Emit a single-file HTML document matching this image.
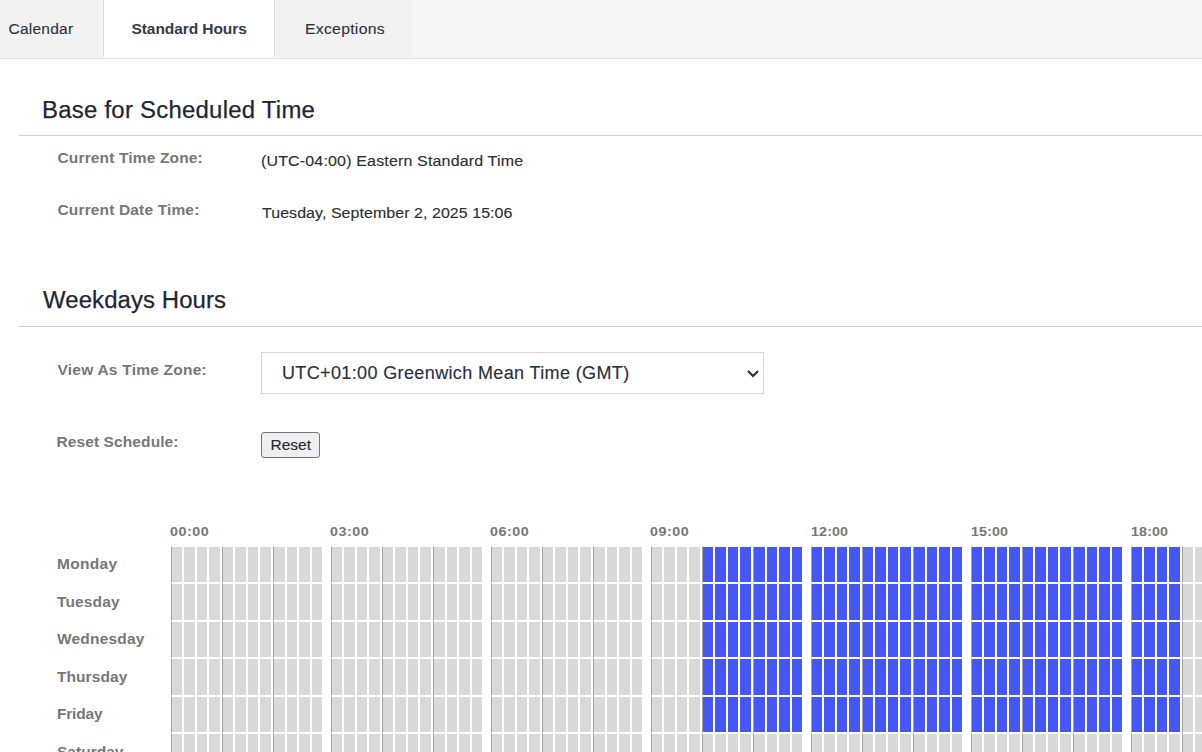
<!DOCTYPE html>
<html><head><meta charset="utf-8"><style>
html,body{margin:0;padding:0;background:#fff;width:1202px;height:752px;overflow:hidden;position:relative;font-family:"Liberation Sans",sans-serif}
.t{position:absolute;white-space:nowrap;line-height:1}
.tabbar{position:absolute;left:0;top:0;width:1202px;height:58px;background:#f6f6f6;border-bottom:1px solid #dcdfe0}
.tab{position:absolute;top:0;height:58px;background:#f2f2f2}
.hr{position:absolute;left:19px;width:1183px;height:1px;background:#d0d0d0}
.c{position:absolute;background:#d9d9d9;display:block}
.c.bl{background:#4557f7}
.b{position:absolute;width:1px;background:#a2a2a2;display:block}
</style></head><body>
<div class="tabbar"></div>
<div class="tab" style="left:0;width:101px;height:57px"></div>
<div class="tab" style="left:103px;width:172px;height:58px;background:#fff"></div>
<div style="position:absolute;left:103px;top:0;width:1px;height:57px;background:#d9dbdd"></div>
<div style="position:absolute;left:274px;top:0;width:1px;height:57px;background:#d9dbdd"></div>
<div class="tab" style="left:276px;width:136px;height:57px"></div>
<div class="t" style="left:8.50px;top:20.88px;font-size:15.5px;font-weight:400;color:#2a3140;letter-spacing:0.240px;-webkit-text-stroke:0.1px #2a3140;">Calendar</div>
<div class="t" style="left:131.50px;top:20.88px;font-size:15.5px;font-weight:700;color:#343b49;letter-spacing:-0.070px;">Standard Hours</div>
<div class="t" style="left:304.80px;top:20.88px;font-size:15.5px;font-weight:400;color:#2a3140;letter-spacing:0.250px;transform:scaleX(1.02);transform-origin:0 0;-webkit-text-stroke:0.1px #2a3140;">Exceptions</div>
<div class="t" style="left:41.50px;top:98.53px;font-size:23px;font-weight:400;color:#1f2636;letter-spacing:0.245px;transform:scaleX(1.04);transform-origin:0 0;-webkit-text-stroke:0.25px #1f2636;">Base for Scheduled Time</div>
<div class="hr" style="top:135px"></div>
<div class="t" style="left:57.50px;top:149.88px;font-size:15.5px;font-weight:700;color:#777;letter-spacing:0.150px;">Current Time Zone:</div>
<div class="t" style="left:261.00px;top:152.88px;font-size:15.5px;font-weight:400;color:#2b2f36;letter-spacing:0.170px;transform:scaleX(1.03);transform-origin:0 0;-webkit-text-stroke:0.15px #2b2f36;">(UTC-04:00) Eastern Standard Time</div>
<div class="t" style="left:57.50px;top:201.88px;font-size:15.5px;font-weight:700;color:#777;letter-spacing:0.150px;">Current Date Time:</div>
<div class="t" style="left:261.50px;top:204.88px;font-size:15.5px;font-weight:400;color:#2b2f36;letter-spacing:0.060px;transform:scaleX(1.03);transform-origin:0 0;-webkit-text-stroke:0.15px #2b2f36;">Tuesday, September 2, 2025 15:06</div>
<div class="t" style="left:43.00px;top:288.53px;font-size:23px;font-weight:400;color:#1f2636;letter-spacing:0.100px;transform:scaleX(1.04);transform-origin:0 0;-webkit-text-stroke:0.25px #1f2636;">Weekdays Hours</div>
<div class="hr" style="top:326px"></div>
<div class="t" style="left:57.50px;top:361.88px;font-size:15.5px;font-weight:700;color:#777;letter-spacing:0.230px;">View As Time Zone:</div>
<div style="position:absolute;left:261px;top:352px;width:501px;height:40px;border:1px solid #d5d7d9;background:#fff"></div>
<div class="t" style="left:282.00px;top:363.76px;font-size:18px;font-weight:400;color:#2a3040;letter-spacing:0.370px;-webkit-text-stroke:0.15px #2a3040;">UTC+01:00 Greenwich Mean Time (GMT)</div>
<svg style="position:absolute;left:746px;top:368px" width="14" height="11" viewBox="0 0 14 11"><path d="M2 3 L7 8 L12 3" fill="none" stroke="#2a3040" stroke-width="2.2"/></svg>
<div class="t" style="left:56.50px;top:433.88px;font-size:15.5px;font-weight:700;color:#777;letter-spacing:0.100px;">Reset Schedule:</div>
<div style="position:absolute;left:261px;top:432px;width:57px;height:24px;border:1px solid #767676;border-radius:3px;background:#efefef"></div>
<div class="t" style="left:270.50px;top:436.88px;font-size:15.5px;font-weight:400;color:#1f2937;letter-spacing:0.000px;-webkit-text-stroke:0.15px #1f2937;">Reset</div>
<div class="t" style="left:57.00px;top:556.28px;font-size:15.5px;font-weight:700;color:#777;letter-spacing:0.300px;">Monday</div><div class="t" style="left:57.00px;top:593.78px;font-size:15.5px;font-weight:700;color:#777;letter-spacing:0.130px;">Tuesday</div><div class="t" style="left:57.00px;top:631.28px;font-size:15.5px;font-weight:700;color:#777;letter-spacing:0.190px;">Wednesday</div><div class="t" style="left:57.00px;top:668.78px;font-size:15.5px;font-weight:700;color:#777;letter-spacing:0.070px;">Thursday</div><div class="t" style="left:57.00px;top:706.28px;font-size:15.5px;font-weight:700;color:#777;letter-spacing:-0.200px;">Friday</div><div class="t" style="left:57.00px;top:743.78px;font-size:15.5px;font-weight:700;color:#777;letter-spacing:0.010px;">Saturday</div><div class="t" style="left:170.00px;top:525.00px;font-size:13px;font-weight:700;color:#777;letter-spacing:0.500px;transform:scaleX(1.1);transform-origin:0 0;">00:00</div><div class="t" style="left:330.00px;top:525.00px;font-size:13px;font-weight:700;color:#777;letter-spacing:0.500px;transform:scaleX(1.1);transform-origin:0 0;">03:00</div><div class="t" style="left:490.00px;top:525.00px;font-size:13px;font-weight:700;color:#777;letter-spacing:0.500px;transform:scaleX(1.1);transform-origin:0 0;">06:00</div><div class="t" style="left:650.00px;top:525.00px;font-size:13px;font-weight:700;color:#777;letter-spacing:0.500px;transform:scaleX(1.1);transform-origin:0 0;">09:00</div><div class="t" style="left:811.30px;top:525.00px;font-size:13px;font-weight:700;color:#777;letter-spacing:0.100px;transform:scaleX(1.1);transform-origin:0 0;">12:00</div><div class="t" style="left:971.30px;top:525.00px;font-size:13px;font-weight:700;color:#777;letter-spacing:0.100px;transform:scaleX(1.1);transform-origin:0 0;">15:00</div><div class="t" style="left:1131.30px;top:525.00px;font-size:13px;font-weight:700;color:#777;letter-spacing:0.100px;transform:scaleX(1.1);transform-origin:0 0;">18:00</div>
<i class="b" style="left:171px;top:546px;height:206px;background:#d6d6d6"></i><i class="b" style="left:171px;top:547px;height:35px"></i><i class="c" style="left:172px;top:547px;width:10px;height:35px"></i><i class="c" style="left:184px;top:547px;width:11px;height:35px"></i><i class="c" style="left:197px;top:547px;width:10px;height:35px"></i><i class="c" style="left:209px;top:547px;width:11px;height:35px"></i><i class="b" style="left:222px;top:546px;height:206px;background:#d6d6d6"></i><i class="b" style="left:222px;top:547px;height:35px"></i><i class="c" style="left:223px;top:547px;width:10px;height:35px"></i><i class="c" style="left:235px;top:547px;width:11px;height:35px"></i><i class="c" style="left:248px;top:547px;width:10px;height:35px"></i><i class="c" style="left:260px;top:547px;width:11px;height:35px"></i><i class="b" style="left:273px;top:546px;height:206px;background:#d6d6d6"></i><i class="b" style="left:273px;top:547px;height:35px"></i><i class="c" style="left:274px;top:547px;width:11px;height:35px"></i><i class="c" style="left:287px;top:547px;width:10px;height:35px"></i><i class="c" style="left:299px;top:547px;width:11px;height:35px"></i><i class="c" style="left:312px;top:547px;width:10px;height:35px"></i><i class="b" style="left:331px;top:546px;height:206px;background:#d6d6d6"></i><i class="b" style="left:331px;top:547px;height:35px"></i><i class="c" style="left:332px;top:547px;width:10px;height:35px"></i><i class="c" style="left:344px;top:547px;width:11px;height:35px"></i><i class="c" style="left:357px;top:547px;width:10px;height:35px"></i><i class="c" style="left:369px;top:547px;width:11px;height:35px"></i><i class="b" style="left:382px;top:546px;height:206px;background:#d6d6d6"></i><i class="b" style="left:382px;top:547px;height:35px"></i><i class="c" style="left:383px;top:547px;width:10px;height:35px"></i><i class="c" style="left:395px;top:547px;width:11px;height:35px"></i><i class="c" style="left:408px;top:547px;width:10px;height:35px"></i><i class="c" style="left:420px;top:547px;width:11px;height:35px"></i><i class="b" style="left:433px;top:546px;height:206px;background:#d6d6d6"></i><i class="b" style="left:433px;top:547px;height:35px"></i><i class="c" style="left:434px;top:547px;width:11px;height:35px"></i><i class="c" style="left:447px;top:547px;width:10px;height:35px"></i><i class="c" style="left:459px;top:547px;width:11px;height:35px"></i><i class="c" style="left:472px;top:547px;width:10px;height:35px"></i><i class="b" style="left:491px;top:546px;height:206px;background:#d6d6d6"></i><i class="b" style="left:491px;top:547px;height:35px"></i><i class="c" style="left:492px;top:547px;width:10px;height:35px"></i><i class="c" style="left:504px;top:547px;width:11px;height:35px"></i><i class="c" style="left:517px;top:547px;width:10px;height:35px"></i><i class="c" style="left:529px;top:547px;width:11px;height:35px"></i><i class="b" style="left:542px;top:546px;height:206px;background:#d6d6d6"></i><i class="b" style="left:542px;top:547px;height:35px"></i><i class="c" style="left:543px;top:547px;width:10px;height:35px"></i><i class="c" style="left:555px;top:547px;width:11px;height:35px"></i><i class="c" style="left:568px;top:547px;width:10px;height:35px"></i><i class="c" style="left:580px;top:547px;width:11px;height:35px"></i><i class="b" style="left:593px;top:546px;height:206px;background:#d6d6d6"></i><i class="b" style="left:593px;top:547px;height:35px"></i><i class="c" style="left:594px;top:547px;width:11px;height:35px"></i><i class="c" style="left:607px;top:547px;width:10px;height:35px"></i><i class="c" style="left:619px;top:547px;width:11px;height:35px"></i><i class="c" style="left:632px;top:547px;width:10px;height:35px"></i><i class="b" style="left:651px;top:546px;height:206px;background:#d6d6d6"></i><i class="b" style="left:651px;top:547px;height:35px"></i><i class="c" style="left:652px;top:547px;width:10px;height:35px"></i><i class="c" style="left:664px;top:547px;width:11px;height:35px"></i><i class="c" style="left:677px;top:547px;width:10px;height:35px"></i><i class="c" style="left:689px;top:547px;width:11px;height:35px"></i><i class="b" style="left:702px;top:546px;height:206px;background:#d6d6d6"></i><i class="b" style="left:702px;top:547px;height:35px"></i><i class="c bl" style="left:703px;top:547px;width:10px;height:35px"></i><i class="c bl" style="left:715px;top:547px;width:11px;height:35px"></i><i class="c bl" style="left:728px;top:547px;width:10px;height:35px"></i><i class="c bl" style="left:740px;top:547px;width:11px;height:35px"></i><i class="b" style="left:753px;top:546px;height:206px;background:#d6d6d6"></i><i class="b" style="left:753px;top:547px;height:35px"></i><i class="c bl" style="left:754px;top:547px;width:11px;height:35px"></i><i class="c bl" style="left:767px;top:547px;width:10px;height:35px"></i><i class="c bl" style="left:779px;top:547px;width:11px;height:35px"></i><i class="c bl" style="left:792px;top:547px;width:10px;height:35px"></i><i class="b" style="left:811px;top:546px;height:206px;background:#d6d6d6"></i><i class="b" style="left:811px;top:547px;height:35px"></i><i class="c bl" style="left:812px;top:547px;width:10px;height:35px"></i><i class="c bl" style="left:824px;top:547px;width:11px;height:35px"></i><i class="c bl" style="left:837px;top:547px;width:10px;height:35px"></i><i class="c bl" style="left:849px;top:547px;width:11px;height:35px"></i><i class="b" style="left:862px;top:546px;height:206px;background:#d6d6d6"></i><i class="b" style="left:862px;top:547px;height:35px"></i><i class="c bl" style="left:863px;top:547px;width:10px;height:35px"></i><i class="c bl" style="left:875px;top:547px;width:11px;height:35px"></i><i class="c bl" style="left:888px;top:547px;width:10px;height:35px"></i><i class="c bl" style="left:900px;top:547px;width:11px;height:35px"></i><i class="b" style="left:913px;top:546px;height:206px;background:#d6d6d6"></i><i class="b" style="left:913px;top:547px;height:35px"></i><i class="c bl" style="left:914px;top:547px;width:11px;height:35px"></i><i class="c bl" style="left:927px;top:547px;width:10px;height:35px"></i><i class="c bl" style="left:939px;top:547px;width:11px;height:35px"></i><i class="c bl" style="left:952px;top:547px;width:10px;height:35px"></i><i class="b" style="left:971px;top:546px;height:206px;background:#d6d6d6"></i><i class="b" style="left:971px;top:547px;height:35px"></i><i class="c bl" style="left:972px;top:547px;width:10px;height:35px"></i><i class="c bl" style="left:984px;top:547px;width:11px;height:35px"></i><i class="c bl" style="left:997px;top:547px;width:10px;height:35px"></i><i class="c bl" style="left:1009px;top:547px;width:11px;height:35px"></i><i class="b" style="left:1022px;top:546px;height:206px;background:#d6d6d6"></i><i class="b" style="left:1022px;top:547px;height:35px"></i><i class="c bl" style="left:1023px;top:547px;width:10px;height:35px"></i><i class="c bl" style="left:1035px;top:547px;width:11px;height:35px"></i><i class="c bl" style="left:1048px;top:547px;width:10px;height:35px"></i><i class="c bl" style="left:1060px;top:547px;width:11px;height:35px"></i><i class="b" style="left:1073px;top:546px;height:206px;background:#d6d6d6"></i><i class="b" style="left:1073px;top:547px;height:35px"></i><i class="c bl" style="left:1074px;top:547px;width:11px;height:35px"></i><i class="c bl" style="left:1087px;top:547px;width:10px;height:35px"></i><i class="c bl" style="left:1099px;top:547px;width:11px;height:35px"></i><i class="c bl" style="left:1112px;top:547px;width:10px;height:35px"></i><i class="b" style="left:1131px;top:546px;height:206px;background:#d6d6d6"></i><i class="b" style="left:1131px;top:547px;height:35px"></i><i class="c bl" style="left:1132px;top:547px;width:10px;height:35px"></i><i class="c bl" style="left:1144px;top:547px;width:11px;height:35px"></i><i class="c bl" style="left:1157px;top:547px;width:10px;height:35px"></i><i class="c bl" style="left:1169px;top:547px;width:11px;height:35px"></i><i class="b" style="left:1182px;top:546px;height:206px;background:#d6d6d6"></i><i class="b" style="left:1182px;top:547px;height:35px"></i><i class="c" style="left:1183px;top:547px;width:10px;height:35px"></i><i class="c" style="left:1195px;top:547px;width:11px;height:35px"></i><i class="b" style="left:171px;top:584px;height:36px"></i><i class="c" style="left:172px;top:584px;width:10px;height:36px"></i><i class="c" style="left:184px;top:584px;width:11px;height:36px"></i><i class="c" style="left:197px;top:584px;width:10px;height:36px"></i><i class="c" style="left:209px;top:584px;width:11px;height:36px"></i><i class="b" style="left:222px;top:584px;height:36px"></i><i class="c" style="left:223px;top:584px;width:10px;height:36px"></i><i class="c" style="left:235px;top:584px;width:11px;height:36px"></i><i class="c" style="left:248px;top:584px;width:10px;height:36px"></i><i class="c" style="left:260px;top:584px;width:11px;height:36px"></i><i class="b" style="left:273px;top:584px;height:36px"></i><i class="c" style="left:274px;top:584px;width:11px;height:36px"></i><i class="c" style="left:287px;top:584px;width:10px;height:36px"></i><i class="c" style="left:299px;top:584px;width:11px;height:36px"></i><i class="c" style="left:312px;top:584px;width:10px;height:36px"></i><i class="b" style="left:331px;top:584px;height:36px"></i><i class="c" style="left:332px;top:584px;width:10px;height:36px"></i><i class="c" style="left:344px;top:584px;width:11px;height:36px"></i><i class="c" style="left:357px;top:584px;width:10px;height:36px"></i><i class="c" style="left:369px;top:584px;width:11px;height:36px"></i><i class="b" style="left:382px;top:584px;height:36px"></i><i class="c" style="left:383px;top:584px;width:10px;height:36px"></i><i class="c" style="left:395px;top:584px;width:11px;height:36px"></i><i class="c" style="left:408px;top:584px;width:10px;height:36px"></i><i class="c" style="left:420px;top:584px;width:11px;height:36px"></i><i class="b" style="left:433px;top:584px;height:36px"></i><i class="c" style="left:434px;top:584px;width:11px;height:36px"></i><i class="c" style="left:447px;top:584px;width:10px;height:36px"></i><i class="c" style="left:459px;top:584px;width:11px;height:36px"></i><i class="c" style="left:472px;top:584px;width:10px;height:36px"></i><i class="b" style="left:491px;top:584px;height:36px"></i><i class="c" style="left:492px;top:584px;width:10px;height:36px"></i><i class="c" style="left:504px;top:584px;width:11px;height:36px"></i><i class="c" style="left:517px;top:584px;width:10px;height:36px"></i><i class="c" style="left:529px;top:584px;width:11px;height:36px"></i><i class="b" style="left:542px;top:584px;height:36px"></i><i class="c" style="left:543px;top:584px;width:10px;height:36px"></i><i class="c" style="left:555px;top:584px;width:11px;height:36px"></i><i class="c" style="left:568px;top:584px;width:10px;height:36px"></i><i class="c" style="left:580px;top:584px;width:11px;height:36px"></i><i class="b" style="left:593px;top:584px;height:36px"></i><i class="c" style="left:594px;top:584px;width:11px;height:36px"></i><i class="c" style="left:607px;top:584px;width:10px;height:36px"></i><i class="c" style="left:619px;top:584px;width:11px;height:36px"></i><i class="c" style="left:632px;top:584px;width:10px;height:36px"></i><i class="b" style="left:651px;top:584px;height:36px"></i><i class="c" style="left:652px;top:584px;width:10px;height:36px"></i><i class="c" style="left:664px;top:584px;width:11px;height:36px"></i><i class="c" style="left:677px;top:584px;width:10px;height:36px"></i><i class="c" style="left:689px;top:584px;width:11px;height:36px"></i><i class="b" style="left:702px;top:584px;height:36px"></i><i class="c bl" style="left:703px;top:584px;width:10px;height:36px"></i><i class="c bl" style="left:715px;top:584px;width:11px;height:36px"></i><i class="c bl" style="left:728px;top:584px;width:10px;height:36px"></i><i class="c bl" style="left:740px;top:584px;width:11px;height:36px"></i><i class="b" style="left:753px;top:584px;height:36px"></i><i class="c bl" style="left:754px;top:584px;width:11px;height:36px"></i><i class="c bl" style="left:767px;top:584px;width:10px;height:36px"></i><i class="c bl" style="left:779px;top:584px;width:11px;height:36px"></i><i class="c bl" style="left:792px;top:584px;width:10px;height:36px"></i><i class="b" style="left:811px;top:584px;height:36px"></i><i class="c bl" style="left:812px;top:584px;width:10px;height:36px"></i><i class="c bl" style="left:824px;top:584px;width:11px;height:36px"></i><i class="c bl" style="left:837px;top:584px;width:10px;height:36px"></i><i class="c bl" style="left:849px;top:584px;width:11px;height:36px"></i><i class="b" style="left:862px;top:584px;height:36px"></i><i class="c bl" style="left:863px;top:584px;width:10px;height:36px"></i><i class="c bl" style="left:875px;top:584px;width:11px;height:36px"></i><i class="c bl" style="left:888px;top:584px;width:10px;height:36px"></i><i class="c bl" style="left:900px;top:584px;width:11px;height:36px"></i><i class="b" style="left:913px;top:584px;height:36px"></i><i class="c bl" style="left:914px;top:584px;width:11px;height:36px"></i><i class="c bl" style="left:927px;top:584px;width:10px;height:36px"></i><i class="c bl" style="left:939px;top:584px;width:11px;height:36px"></i><i class="c bl" style="left:952px;top:584px;width:10px;height:36px"></i><i class="b" style="left:971px;top:584px;height:36px"></i><i class="c bl" style="left:972px;top:584px;width:10px;height:36px"></i><i class="c bl" style="left:984px;top:584px;width:11px;height:36px"></i><i class="c bl" style="left:997px;top:584px;width:10px;height:36px"></i><i class="c bl" style="left:1009px;top:584px;width:11px;height:36px"></i><i class="b" style="left:1022px;top:584px;height:36px"></i><i class="c bl" style="left:1023px;top:584px;width:10px;height:36px"></i><i class="c bl" style="left:1035px;top:584px;width:11px;height:36px"></i><i class="c bl" style="left:1048px;top:584px;width:10px;height:36px"></i><i class="c bl" style="left:1060px;top:584px;width:11px;height:36px"></i><i class="b" style="left:1073px;top:584px;height:36px"></i><i class="c bl" style="left:1074px;top:584px;width:11px;height:36px"></i><i class="c bl" style="left:1087px;top:584px;width:10px;height:36px"></i><i class="c bl" style="left:1099px;top:584px;width:11px;height:36px"></i><i class="c bl" style="left:1112px;top:584px;width:10px;height:36px"></i><i class="b" style="left:1131px;top:584px;height:36px"></i><i class="c bl" style="left:1132px;top:584px;width:10px;height:36px"></i><i class="c bl" style="left:1144px;top:584px;width:11px;height:36px"></i><i class="c bl" style="left:1157px;top:584px;width:10px;height:36px"></i><i class="c bl" style="left:1169px;top:584px;width:11px;height:36px"></i><i class="b" style="left:1182px;top:584px;height:36px"></i><i class="c" style="left:1183px;top:584px;width:10px;height:36px"></i><i class="c" style="left:1195px;top:584px;width:11px;height:36px"></i><i class="b" style="left:171px;top:622px;height:35px"></i><i class="c" style="left:172px;top:622px;width:10px;height:35px"></i><i class="c" style="left:184px;top:622px;width:11px;height:35px"></i><i class="c" style="left:197px;top:622px;width:10px;height:35px"></i><i class="c" style="left:209px;top:622px;width:11px;height:35px"></i><i class="b" style="left:222px;top:622px;height:35px"></i><i class="c" style="left:223px;top:622px;width:10px;height:35px"></i><i class="c" style="left:235px;top:622px;width:11px;height:35px"></i><i class="c" style="left:248px;top:622px;width:10px;height:35px"></i><i class="c" style="left:260px;top:622px;width:11px;height:35px"></i><i class="b" style="left:273px;top:622px;height:35px"></i><i class="c" style="left:274px;top:622px;width:11px;height:35px"></i><i class="c" style="left:287px;top:622px;width:10px;height:35px"></i><i class="c" style="left:299px;top:622px;width:11px;height:35px"></i><i class="c" style="left:312px;top:622px;width:10px;height:35px"></i><i class="b" style="left:331px;top:622px;height:35px"></i><i class="c" style="left:332px;top:622px;width:10px;height:35px"></i><i class="c" style="left:344px;top:622px;width:11px;height:35px"></i><i class="c" style="left:357px;top:622px;width:10px;height:35px"></i><i class="c" style="left:369px;top:622px;width:11px;height:35px"></i><i class="b" style="left:382px;top:622px;height:35px"></i><i class="c" style="left:383px;top:622px;width:10px;height:35px"></i><i class="c" style="left:395px;top:622px;width:11px;height:35px"></i><i class="c" style="left:408px;top:622px;width:10px;height:35px"></i><i class="c" style="left:420px;top:622px;width:11px;height:35px"></i><i class="b" style="left:433px;top:622px;height:35px"></i><i class="c" style="left:434px;top:622px;width:11px;height:35px"></i><i class="c" style="left:447px;top:622px;width:10px;height:35px"></i><i class="c" style="left:459px;top:622px;width:11px;height:35px"></i><i class="c" style="left:472px;top:622px;width:10px;height:35px"></i><i class="b" style="left:491px;top:622px;height:35px"></i><i class="c" style="left:492px;top:622px;width:10px;height:35px"></i><i class="c" style="left:504px;top:622px;width:11px;height:35px"></i><i class="c" style="left:517px;top:622px;width:10px;height:35px"></i><i class="c" style="left:529px;top:622px;width:11px;height:35px"></i><i class="b" style="left:542px;top:622px;height:35px"></i><i class="c" style="left:543px;top:622px;width:10px;height:35px"></i><i class="c" style="left:555px;top:622px;width:11px;height:35px"></i><i class="c" style="left:568px;top:622px;width:10px;height:35px"></i><i class="c" style="left:580px;top:622px;width:11px;height:35px"></i><i class="b" style="left:593px;top:622px;height:35px"></i><i class="c" style="left:594px;top:622px;width:11px;height:35px"></i><i class="c" style="left:607px;top:622px;width:10px;height:35px"></i><i class="c" style="left:619px;top:622px;width:11px;height:35px"></i><i class="c" style="left:632px;top:622px;width:10px;height:35px"></i><i class="b" style="left:651px;top:622px;height:35px"></i><i class="c" style="left:652px;top:622px;width:10px;height:35px"></i><i class="c" style="left:664px;top:622px;width:11px;height:35px"></i><i class="c" style="left:677px;top:622px;width:10px;height:35px"></i><i class="c" style="left:689px;top:622px;width:11px;height:35px"></i><i class="b" style="left:702px;top:622px;height:35px"></i><i class="c bl" style="left:703px;top:622px;width:10px;height:35px"></i><i class="c bl" style="left:715px;top:622px;width:11px;height:35px"></i><i class="c bl" style="left:728px;top:622px;width:10px;height:35px"></i><i class="c bl" style="left:740px;top:622px;width:11px;height:35px"></i><i class="b" style="left:753px;top:622px;height:35px"></i><i class="c bl" style="left:754px;top:622px;width:11px;height:35px"></i><i class="c bl" style="left:767px;top:622px;width:10px;height:35px"></i><i class="c bl" style="left:779px;top:622px;width:11px;height:35px"></i><i class="c bl" style="left:792px;top:622px;width:10px;height:35px"></i><i class="b" style="left:811px;top:622px;height:35px"></i><i class="c bl" style="left:812px;top:622px;width:10px;height:35px"></i><i class="c bl" style="left:824px;top:622px;width:11px;height:35px"></i><i class="c bl" style="left:837px;top:622px;width:10px;height:35px"></i><i class="c bl" style="left:849px;top:622px;width:11px;height:35px"></i><i class="b" style="left:862px;top:622px;height:35px"></i><i class="c bl" style="left:863px;top:622px;width:10px;height:35px"></i><i class="c bl" style="left:875px;top:622px;width:11px;height:35px"></i><i class="c bl" style="left:888px;top:622px;width:10px;height:35px"></i><i class="c bl" style="left:900px;top:622px;width:11px;height:35px"></i><i class="b" style="left:913px;top:622px;height:35px"></i><i class="c bl" style="left:914px;top:622px;width:11px;height:35px"></i><i class="c bl" style="left:927px;top:622px;width:10px;height:35px"></i><i class="c bl" style="left:939px;top:622px;width:11px;height:35px"></i><i class="c bl" style="left:952px;top:622px;width:10px;height:35px"></i><i class="b" style="left:971px;top:622px;height:35px"></i><i class="c bl" style="left:972px;top:622px;width:10px;height:35px"></i><i class="c bl" style="left:984px;top:622px;width:11px;height:35px"></i><i class="c bl" style="left:997px;top:622px;width:10px;height:35px"></i><i class="c bl" style="left:1009px;top:622px;width:11px;height:35px"></i><i class="b" style="left:1022px;top:622px;height:35px"></i><i class="c bl" style="left:1023px;top:622px;width:10px;height:35px"></i><i class="c bl" style="left:1035px;top:622px;width:11px;height:35px"></i><i class="c bl" style="left:1048px;top:622px;width:10px;height:35px"></i><i class="c bl" style="left:1060px;top:622px;width:11px;height:35px"></i><i class="b" style="left:1073px;top:622px;height:35px"></i><i class="c bl" style="left:1074px;top:622px;width:11px;height:35px"></i><i class="c bl" style="left:1087px;top:622px;width:10px;height:35px"></i><i class="c bl" style="left:1099px;top:622px;width:11px;height:35px"></i><i class="c bl" style="left:1112px;top:622px;width:10px;height:35px"></i><i class="b" style="left:1131px;top:622px;height:35px"></i><i class="c bl" style="left:1132px;top:622px;width:10px;height:35px"></i><i class="c bl" style="left:1144px;top:622px;width:11px;height:35px"></i><i class="c bl" style="left:1157px;top:622px;width:10px;height:35px"></i><i class="c bl" style="left:1169px;top:622px;width:11px;height:35px"></i><i class="b" style="left:1182px;top:622px;height:35px"></i><i class="c" style="left:1183px;top:622px;width:10px;height:35px"></i><i class="c" style="left:1195px;top:622px;width:11px;height:35px"></i><i class="b" style="left:171px;top:659px;height:36px"></i><i class="c" style="left:172px;top:659px;width:10px;height:36px"></i><i class="c" style="left:184px;top:659px;width:11px;height:36px"></i><i class="c" style="left:197px;top:659px;width:10px;height:36px"></i><i class="c" style="left:209px;top:659px;width:11px;height:36px"></i><i class="b" style="left:222px;top:659px;height:36px"></i><i class="c" style="left:223px;top:659px;width:10px;height:36px"></i><i class="c" style="left:235px;top:659px;width:11px;height:36px"></i><i class="c" style="left:248px;top:659px;width:10px;height:36px"></i><i class="c" style="left:260px;top:659px;width:11px;height:36px"></i><i class="b" style="left:273px;top:659px;height:36px"></i><i class="c" style="left:274px;top:659px;width:11px;height:36px"></i><i class="c" style="left:287px;top:659px;width:10px;height:36px"></i><i class="c" style="left:299px;top:659px;width:11px;height:36px"></i><i class="c" style="left:312px;top:659px;width:10px;height:36px"></i><i class="b" style="left:331px;top:659px;height:36px"></i><i class="c" style="left:332px;top:659px;width:10px;height:36px"></i><i class="c" style="left:344px;top:659px;width:11px;height:36px"></i><i class="c" style="left:357px;top:659px;width:10px;height:36px"></i><i class="c" style="left:369px;top:659px;width:11px;height:36px"></i><i class="b" style="left:382px;top:659px;height:36px"></i><i class="c" style="left:383px;top:659px;width:10px;height:36px"></i><i class="c" style="left:395px;top:659px;width:11px;height:36px"></i><i class="c" style="left:408px;top:659px;width:10px;height:36px"></i><i class="c" style="left:420px;top:659px;width:11px;height:36px"></i><i class="b" style="left:433px;top:659px;height:36px"></i><i class="c" style="left:434px;top:659px;width:11px;height:36px"></i><i class="c" style="left:447px;top:659px;width:10px;height:36px"></i><i class="c" style="left:459px;top:659px;width:11px;height:36px"></i><i class="c" style="left:472px;top:659px;width:10px;height:36px"></i><i class="b" style="left:491px;top:659px;height:36px"></i><i class="c" style="left:492px;top:659px;width:10px;height:36px"></i><i class="c" style="left:504px;top:659px;width:11px;height:36px"></i><i class="c" style="left:517px;top:659px;width:10px;height:36px"></i><i class="c" style="left:529px;top:659px;width:11px;height:36px"></i><i class="b" style="left:542px;top:659px;height:36px"></i><i class="c" style="left:543px;top:659px;width:10px;height:36px"></i><i class="c" style="left:555px;top:659px;width:11px;height:36px"></i><i class="c" style="left:568px;top:659px;width:10px;height:36px"></i><i class="c" style="left:580px;top:659px;width:11px;height:36px"></i><i class="b" style="left:593px;top:659px;height:36px"></i><i class="c" style="left:594px;top:659px;width:11px;height:36px"></i><i class="c" style="left:607px;top:659px;width:10px;height:36px"></i><i class="c" style="left:619px;top:659px;width:11px;height:36px"></i><i class="c" style="left:632px;top:659px;width:10px;height:36px"></i><i class="b" style="left:651px;top:659px;height:36px"></i><i class="c" style="left:652px;top:659px;width:10px;height:36px"></i><i class="c" style="left:664px;top:659px;width:11px;height:36px"></i><i class="c" style="left:677px;top:659px;width:10px;height:36px"></i><i class="c" style="left:689px;top:659px;width:11px;height:36px"></i><i class="b" style="left:702px;top:659px;height:36px"></i><i class="c bl" style="left:703px;top:659px;width:10px;height:36px"></i><i class="c bl" style="left:715px;top:659px;width:11px;height:36px"></i><i class="c bl" style="left:728px;top:659px;width:10px;height:36px"></i><i class="c bl" style="left:740px;top:659px;width:11px;height:36px"></i><i class="b" style="left:753px;top:659px;height:36px"></i><i class="c bl" style="left:754px;top:659px;width:11px;height:36px"></i><i class="c bl" style="left:767px;top:659px;width:10px;height:36px"></i><i class="c bl" style="left:779px;top:659px;width:11px;height:36px"></i><i class="c bl" style="left:792px;top:659px;width:10px;height:36px"></i><i class="b" style="left:811px;top:659px;height:36px"></i><i class="c bl" style="left:812px;top:659px;width:10px;height:36px"></i><i class="c bl" style="left:824px;top:659px;width:11px;height:36px"></i><i class="c bl" style="left:837px;top:659px;width:10px;height:36px"></i><i class="c bl" style="left:849px;top:659px;width:11px;height:36px"></i><i class="b" style="left:862px;top:659px;height:36px"></i><i class="c bl" style="left:863px;top:659px;width:10px;height:36px"></i><i class="c bl" style="left:875px;top:659px;width:11px;height:36px"></i><i class="c bl" style="left:888px;top:659px;width:10px;height:36px"></i><i class="c bl" style="left:900px;top:659px;width:11px;height:36px"></i><i class="b" style="left:913px;top:659px;height:36px"></i><i class="c bl" style="left:914px;top:659px;width:11px;height:36px"></i><i class="c bl" style="left:927px;top:659px;width:10px;height:36px"></i><i class="c bl" style="left:939px;top:659px;width:11px;height:36px"></i><i class="c bl" style="left:952px;top:659px;width:10px;height:36px"></i><i class="b" style="left:971px;top:659px;height:36px"></i><i class="c bl" style="left:972px;top:659px;width:10px;height:36px"></i><i class="c bl" style="left:984px;top:659px;width:11px;height:36px"></i><i class="c bl" style="left:997px;top:659px;width:10px;height:36px"></i><i class="c bl" style="left:1009px;top:659px;width:11px;height:36px"></i><i class="b" style="left:1022px;top:659px;height:36px"></i><i class="c bl" style="left:1023px;top:659px;width:10px;height:36px"></i><i class="c bl" style="left:1035px;top:659px;width:11px;height:36px"></i><i class="c bl" style="left:1048px;top:659px;width:10px;height:36px"></i><i class="c bl" style="left:1060px;top:659px;width:11px;height:36px"></i><i class="b" style="left:1073px;top:659px;height:36px"></i><i class="c bl" style="left:1074px;top:659px;width:11px;height:36px"></i><i class="c bl" style="left:1087px;top:659px;width:10px;height:36px"></i><i class="c bl" style="left:1099px;top:659px;width:11px;height:36px"></i><i class="c bl" style="left:1112px;top:659px;width:10px;height:36px"></i><i class="b" style="left:1131px;top:659px;height:36px"></i><i class="c bl" style="left:1132px;top:659px;width:10px;height:36px"></i><i class="c bl" style="left:1144px;top:659px;width:11px;height:36px"></i><i class="c bl" style="left:1157px;top:659px;width:10px;height:36px"></i><i class="c bl" style="left:1169px;top:659px;width:11px;height:36px"></i><i class="b" style="left:1182px;top:659px;height:36px"></i><i class="c" style="left:1183px;top:659px;width:10px;height:36px"></i><i class="c" style="left:1195px;top:659px;width:11px;height:36px"></i><i class="b" style="left:171px;top:697px;height:35px"></i><i class="c" style="left:172px;top:697px;width:10px;height:35px"></i><i class="c" style="left:184px;top:697px;width:11px;height:35px"></i><i class="c" style="left:197px;top:697px;width:10px;height:35px"></i><i class="c" style="left:209px;top:697px;width:11px;height:35px"></i><i class="b" style="left:222px;top:697px;height:35px"></i><i class="c" style="left:223px;top:697px;width:10px;height:35px"></i><i class="c" style="left:235px;top:697px;width:11px;height:35px"></i><i class="c" style="left:248px;top:697px;width:10px;height:35px"></i><i class="c" style="left:260px;top:697px;width:11px;height:35px"></i><i class="b" style="left:273px;top:697px;height:35px"></i><i class="c" style="left:274px;top:697px;width:11px;height:35px"></i><i class="c" style="left:287px;top:697px;width:10px;height:35px"></i><i class="c" style="left:299px;top:697px;width:11px;height:35px"></i><i class="c" style="left:312px;top:697px;width:10px;height:35px"></i><i class="b" style="left:331px;top:697px;height:35px"></i><i class="c" style="left:332px;top:697px;width:10px;height:35px"></i><i class="c" style="left:344px;top:697px;width:11px;height:35px"></i><i class="c" style="left:357px;top:697px;width:10px;height:35px"></i><i class="c" style="left:369px;top:697px;width:11px;height:35px"></i><i class="b" style="left:382px;top:697px;height:35px"></i><i class="c" style="left:383px;top:697px;width:10px;height:35px"></i><i class="c" style="left:395px;top:697px;width:11px;height:35px"></i><i class="c" style="left:408px;top:697px;width:10px;height:35px"></i><i class="c" style="left:420px;top:697px;width:11px;height:35px"></i><i class="b" style="left:433px;top:697px;height:35px"></i><i class="c" style="left:434px;top:697px;width:11px;height:35px"></i><i class="c" style="left:447px;top:697px;width:10px;height:35px"></i><i class="c" style="left:459px;top:697px;width:11px;height:35px"></i><i class="c" style="left:472px;top:697px;width:10px;height:35px"></i><i class="b" style="left:491px;top:697px;height:35px"></i><i class="c" style="left:492px;top:697px;width:10px;height:35px"></i><i class="c" style="left:504px;top:697px;width:11px;height:35px"></i><i class="c" style="left:517px;top:697px;width:10px;height:35px"></i><i class="c" style="left:529px;top:697px;width:11px;height:35px"></i><i class="b" style="left:542px;top:697px;height:35px"></i><i class="c" style="left:543px;top:697px;width:10px;height:35px"></i><i class="c" style="left:555px;top:697px;width:11px;height:35px"></i><i class="c" style="left:568px;top:697px;width:10px;height:35px"></i><i class="c" style="left:580px;top:697px;width:11px;height:35px"></i><i class="b" style="left:593px;top:697px;height:35px"></i><i class="c" style="left:594px;top:697px;width:11px;height:35px"></i><i class="c" style="left:607px;top:697px;width:10px;height:35px"></i><i class="c" style="left:619px;top:697px;width:11px;height:35px"></i><i class="c" style="left:632px;top:697px;width:10px;height:35px"></i><i class="b" style="left:651px;top:697px;height:35px"></i><i class="c" style="left:652px;top:697px;width:10px;height:35px"></i><i class="c" style="left:664px;top:697px;width:11px;height:35px"></i><i class="c" style="left:677px;top:697px;width:10px;height:35px"></i><i class="c" style="left:689px;top:697px;width:11px;height:35px"></i><i class="b" style="left:702px;top:697px;height:35px"></i><i class="c bl" style="left:703px;top:697px;width:10px;height:35px"></i><i class="c bl" style="left:715px;top:697px;width:11px;height:35px"></i><i class="c bl" style="left:728px;top:697px;width:10px;height:35px"></i><i class="c bl" style="left:740px;top:697px;width:11px;height:35px"></i><i class="b" style="left:753px;top:697px;height:35px"></i><i class="c bl" style="left:754px;top:697px;width:11px;height:35px"></i><i class="c bl" style="left:767px;top:697px;width:10px;height:35px"></i><i class="c bl" style="left:779px;top:697px;width:11px;height:35px"></i><i class="c bl" style="left:792px;top:697px;width:10px;height:35px"></i><i class="b" style="left:811px;top:697px;height:35px"></i><i class="c bl" style="left:812px;top:697px;width:10px;height:35px"></i><i class="c bl" style="left:824px;top:697px;width:11px;height:35px"></i><i class="c bl" style="left:837px;top:697px;width:10px;height:35px"></i><i class="c bl" style="left:849px;top:697px;width:11px;height:35px"></i><i class="b" style="left:862px;top:697px;height:35px"></i><i class="c bl" style="left:863px;top:697px;width:10px;height:35px"></i><i class="c bl" style="left:875px;top:697px;width:11px;height:35px"></i><i class="c bl" style="left:888px;top:697px;width:10px;height:35px"></i><i class="c bl" style="left:900px;top:697px;width:11px;height:35px"></i><i class="b" style="left:913px;top:697px;height:35px"></i><i class="c bl" style="left:914px;top:697px;width:11px;height:35px"></i><i class="c bl" style="left:927px;top:697px;width:10px;height:35px"></i><i class="c bl" style="left:939px;top:697px;width:11px;height:35px"></i><i class="c bl" style="left:952px;top:697px;width:10px;height:35px"></i><i class="b" style="left:971px;top:697px;height:35px"></i><i class="c bl" style="left:972px;top:697px;width:10px;height:35px"></i><i class="c bl" style="left:984px;top:697px;width:11px;height:35px"></i><i class="c bl" style="left:997px;top:697px;width:10px;height:35px"></i><i class="c bl" style="left:1009px;top:697px;width:11px;height:35px"></i><i class="b" style="left:1022px;top:697px;height:35px"></i><i class="c bl" style="left:1023px;top:697px;width:10px;height:35px"></i><i class="c bl" style="left:1035px;top:697px;width:11px;height:35px"></i><i class="c bl" style="left:1048px;top:697px;width:10px;height:35px"></i><i class="c bl" style="left:1060px;top:697px;width:11px;height:35px"></i><i class="b" style="left:1073px;top:697px;height:35px"></i><i class="c bl" style="left:1074px;top:697px;width:11px;height:35px"></i><i class="c bl" style="left:1087px;top:697px;width:10px;height:35px"></i><i class="c bl" style="left:1099px;top:697px;width:11px;height:35px"></i><i class="c bl" style="left:1112px;top:697px;width:10px;height:35px"></i><i class="b" style="left:1131px;top:697px;height:35px"></i><i class="c bl" style="left:1132px;top:697px;width:10px;height:35px"></i><i class="c bl" style="left:1144px;top:697px;width:11px;height:35px"></i><i class="c bl" style="left:1157px;top:697px;width:10px;height:35px"></i><i class="c bl" style="left:1169px;top:697px;width:11px;height:35px"></i><i class="b" style="left:1182px;top:697px;height:35px"></i><i class="c" style="left:1183px;top:697px;width:10px;height:35px"></i><i class="c" style="left:1195px;top:697px;width:11px;height:35px"></i><i class="b" style="left:171px;top:734px;height:36px"></i><i class="c" style="left:172px;top:734px;width:10px;height:36px"></i><i class="c" style="left:184px;top:734px;width:11px;height:36px"></i><i class="c" style="left:197px;top:734px;width:10px;height:36px"></i><i class="c" style="left:209px;top:734px;width:11px;height:36px"></i><i class="b" style="left:222px;top:734px;height:36px"></i><i class="c" style="left:223px;top:734px;width:10px;height:36px"></i><i class="c" style="left:235px;top:734px;width:11px;height:36px"></i><i class="c" style="left:248px;top:734px;width:10px;height:36px"></i><i class="c" style="left:260px;top:734px;width:11px;height:36px"></i><i class="b" style="left:273px;top:734px;height:36px"></i><i class="c" style="left:274px;top:734px;width:11px;height:36px"></i><i class="c" style="left:287px;top:734px;width:10px;height:36px"></i><i class="c" style="left:299px;top:734px;width:11px;height:36px"></i><i class="c" style="left:312px;top:734px;width:10px;height:36px"></i><i class="b" style="left:331px;top:734px;height:36px"></i><i class="c" style="left:332px;top:734px;width:10px;height:36px"></i><i class="c" style="left:344px;top:734px;width:11px;height:36px"></i><i class="c" style="left:357px;top:734px;width:10px;height:36px"></i><i class="c" style="left:369px;top:734px;width:11px;height:36px"></i><i class="b" style="left:382px;top:734px;height:36px"></i><i class="c" style="left:383px;top:734px;width:10px;height:36px"></i><i class="c" style="left:395px;top:734px;width:11px;height:36px"></i><i class="c" style="left:408px;top:734px;width:10px;height:36px"></i><i class="c" style="left:420px;top:734px;width:11px;height:36px"></i><i class="b" style="left:433px;top:734px;height:36px"></i><i class="c" style="left:434px;top:734px;width:11px;height:36px"></i><i class="c" style="left:447px;top:734px;width:10px;height:36px"></i><i class="c" style="left:459px;top:734px;width:11px;height:36px"></i><i class="c" style="left:472px;top:734px;width:10px;height:36px"></i><i class="b" style="left:491px;top:734px;height:36px"></i><i class="c" style="left:492px;top:734px;width:10px;height:36px"></i><i class="c" style="left:504px;top:734px;width:11px;height:36px"></i><i class="c" style="left:517px;top:734px;width:10px;height:36px"></i><i class="c" style="left:529px;top:734px;width:11px;height:36px"></i><i class="b" style="left:542px;top:734px;height:36px"></i><i class="c" style="left:543px;top:734px;width:10px;height:36px"></i><i class="c" style="left:555px;top:734px;width:11px;height:36px"></i><i class="c" style="left:568px;top:734px;width:10px;height:36px"></i><i class="c" style="left:580px;top:734px;width:11px;height:36px"></i><i class="b" style="left:593px;top:734px;height:36px"></i><i class="c" style="left:594px;top:734px;width:11px;height:36px"></i><i class="c" style="left:607px;top:734px;width:10px;height:36px"></i><i class="c" style="left:619px;top:734px;width:11px;height:36px"></i><i class="c" style="left:632px;top:734px;width:10px;height:36px"></i><i class="b" style="left:651px;top:734px;height:36px"></i><i class="c" style="left:652px;top:734px;width:10px;height:36px"></i><i class="c" style="left:664px;top:734px;width:11px;height:36px"></i><i class="c" style="left:677px;top:734px;width:10px;height:36px"></i><i class="c" style="left:689px;top:734px;width:11px;height:36px"></i><i class="b" style="left:702px;top:734px;height:36px"></i><i class="c" style="left:703px;top:734px;width:10px;height:36px"></i><i class="c" style="left:715px;top:734px;width:11px;height:36px"></i><i class="c" style="left:728px;top:734px;width:10px;height:36px"></i><i class="c" style="left:740px;top:734px;width:11px;height:36px"></i><i class="b" style="left:753px;top:734px;height:36px"></i><i class="c" style="left:754px;top:734px;width:11px;height:36px"></i><i class="c" style="left:767px;top:734px;width:10px;height:36px"></i><i class="c" style="left:779px;top:734px;width:11px;height:36px"></i><i class="c" style="left:792px;top:734px;width:10px;height:36px"></i><i class="b" style="left:811px;top:734px;height:36px"></i><i class="c" style="left:812px;top:734px;width:10px;height:36px"></i><i class="c" style="left:824px;top:734px;width:11px;height:36px"></i><i class="c" style="left:837px;top:734px;width:10px;height:36px"></i><i class="c" style="left:849px;top:734px;width:11px;height:36px"></i><i class="b" style="left:862px;top:734px;height:36px"></i><i class="c" style="left:863px;top:734px;width:10px;height:36px"></i><i class="c" style="left:875px;top:734px;width:11px;height:36px"></i><i class="c" style="left:888px;top:734px;width:10px;height:36px"></i><i class="c" style="left:900px;top:734px;width:11px;height:36px"></i><i class="b" style="left:913px;top:734px;height:36px"></i><i class="c" style="left:914px;top:734px;width:11px;height:36px"></i><i class="c" style="left:927px;top:734px;width:10px;height:36px"></i><i class="c" style="left:939px;top:734px;width:11px;height:36px"></i><i class="c" style="left:952px;top:734px;width:10px;height:36px"></i><i class="b" style="left:971px;top:734px;height:36px"></i><i class="c" style="left:972px;top:734px;width:10px;height:36px"></i><i class="c" style="left:984px;top:734px;width:11px;height:36px"></i><i class="c" style="left:997px;top:734px;width:10px;height:36px"></i><i class="c" style="left:1009px;top:734px;width:11px;height:36px"></i><i class="b" style="left:1022px;top:734px;height:36px"></i><i class="c" style="left:1023px;top:734px;width:10px;height:36px"></i><i class="c" style="left:1035px;top:734px;width:11px;height:36px"></i><i class="c" style="left:1048px;top:734px;width:10px;height:36px"></i><i class="c" style="left:1060px;top:734px;width:11px;height:36px"></i><i class="b" style="left:1073px;top:734px;height:36px"></i><i class="c" style="left:1074px;top:734px;width:11px;height:36px"></i><i class="c" style="left:1087px;top:734px;width:10px;height:36px"></i><i class="c" style="left:1099px;top:734px;width:11px;height:36px"></i><i class="c" style="left:1112px;top:734px;width:10px;height:36px"></i><i class="b" style="left:1131px;top:734px;height:36px"></i><i class="c" style="left:1132px;top:734px;width:10px;height:36px"></i><i class="c" style="left:1144px;top:734px;width:11px;height:36px"></i><i class="c" style="left:1157px;top:734px;width:10px;height:36px"></i><i class="c" style="left:1169px;top:734px;width:11px;height:36px"></i><i class="b" style="left:1182px;top:734px;height:36px"></i><i class="c" style="left:1183px;top:734px;width:10px;height:36px"></i><i class="c" style="left:1195px;top:734px;width:11px;height:36px"></i>
</body></html>
